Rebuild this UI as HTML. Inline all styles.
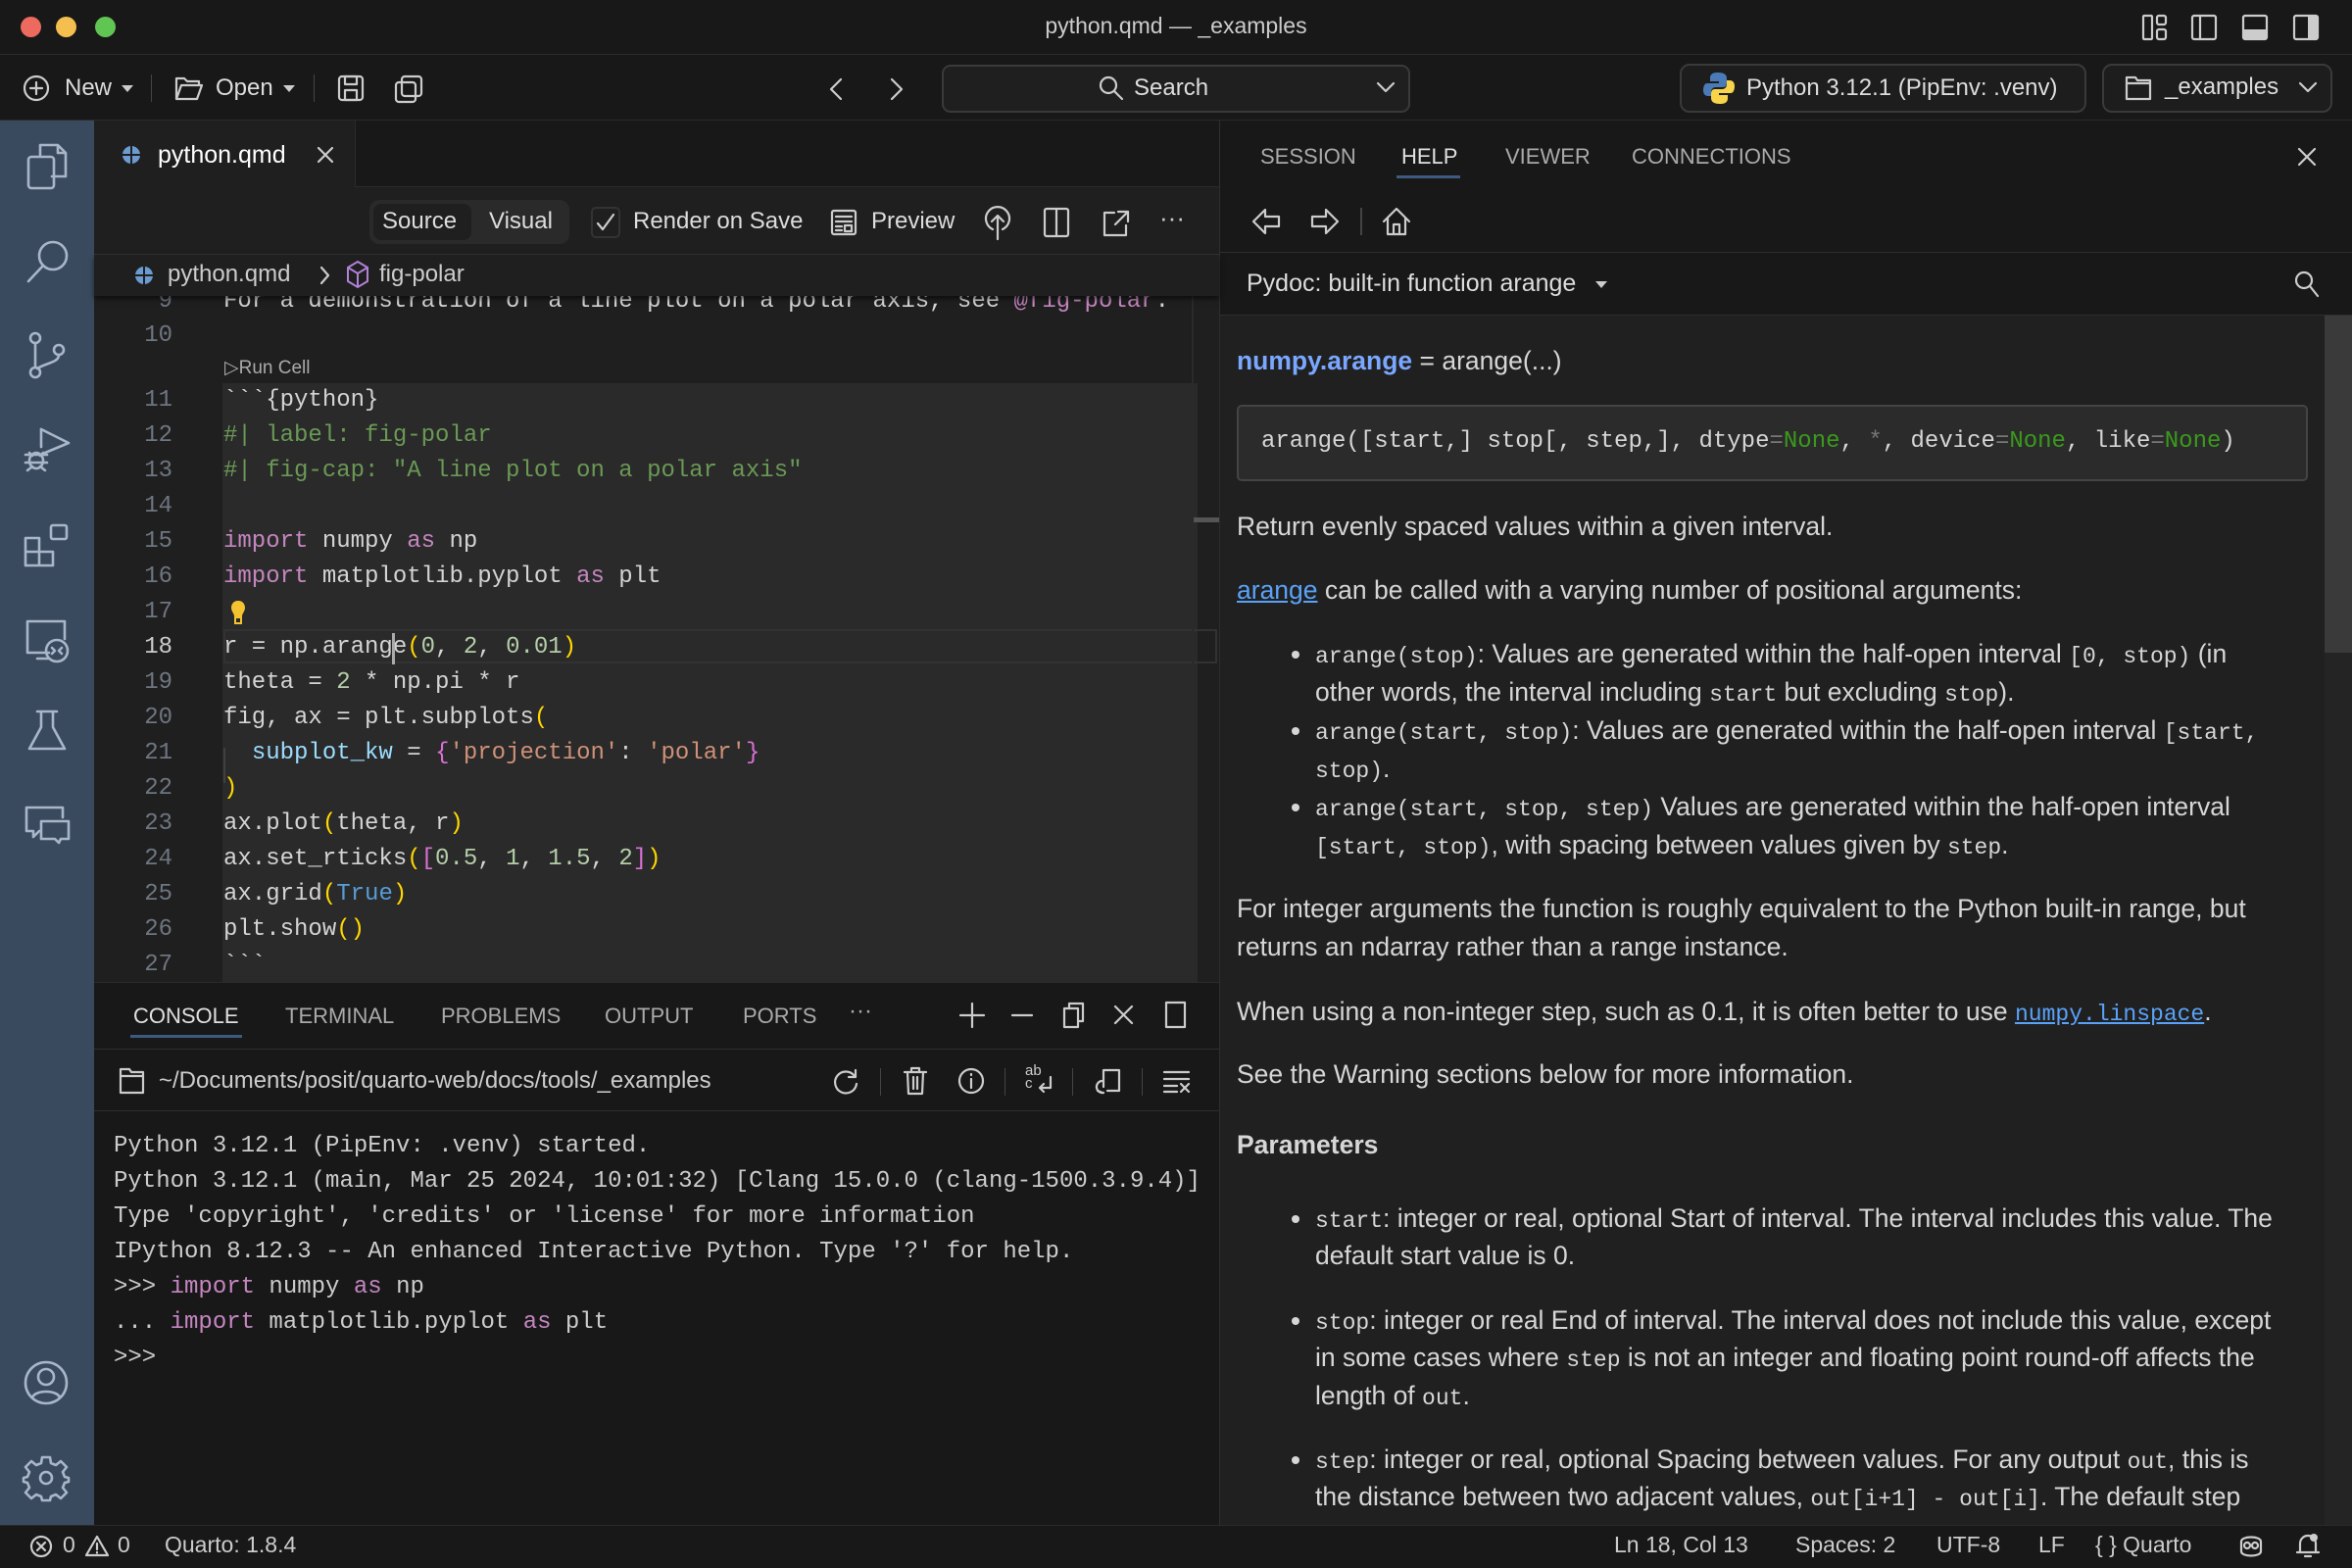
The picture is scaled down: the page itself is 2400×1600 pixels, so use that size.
<!DOCTYPE html>
<html><head><meta charset="utf-8">
<style>
*{box-sizing:border-box;margin:0;padding:0}
body{width:2400px;height:1600px;overflow:hidden;background:#1f1f1f;font-family:"Liberation Sans",sans-serif;color:#ccc;position:relative}
.a{position:absolute}
.m{font-family:"Liberation Mono",monospace}
.t{white-space:pre}
svg{position:absolute;overflow:visible}
.ic{fill:none;stroke:#cccccc;stroke-width:2.2;stroke-linecap:round;stroke-linejoin:round}
.ab{fill:none;stroke:#a9b6c8;stroke-width:2.6;stroke-linecap:round;stroke-linejoin:round}
.ln{position:absolute;left:100px;width:76px;text-align:right;font-family:"Liberation Mono",monospace;font-size:24px;line-height:36px;color:#6e7681}
.cl{position:absolute;left:228px;font-family:"Liberation Mono",monospace;font-size:24px;line-height:36px;white-space:pre;color:#d4d4d4}
.kw{color:#c586c0}.st{color:#ce9178}.nu{color:#b5cea8}.y{color:#ffd700}.p{color:#da70d6}.bl{color:#569cd6}.vr{color:#9cdcfe}.cm{color:#6a9955}
.cs{position:absolute;left:116px;font-family:"Liberation Mono",monospace;font-size:24px;line-height:36px;white-space:pre;color:#cccccc}
.h{position:absolute;left:1262px;font-size:26.5px;line-height:39px;white-space:pre;color:#d6d6d6}
.hb{position:absolute;left:1342px;font-size:26.5px;line-height:39px;white-space:pre;color:#d6d6d6}
.dot{position:absolute;left:1318px;width:8px;height:8px;border-radius:50%;background:#d6d6d6}
.c{font-family:"Liberation Mono",monospace;font-size:23px}
.lk{color:#5aa2f8;text-decoration:underline}
.ng{color:#3a9a1c}
</style></head><body>

<div class="a" style="left:0;top:0;width:2400px;height:123px;background:#181818"></div>
<div class="a" style="left:0;top:55px;width:2400px;height:1px;background:#2b2b2b"></div>
<div class="a" style="left:0;top:122px;width:2400px;height:1px;background:#2b2b2b"></div>
<div class="a" style="left:21px;top:17px;width:21px;height:21px;border-radius:50%;background:#ed6a5e"></div>
<div class="a" style="left:57px;top:17px;width:21px;height:21px;border-radius:50%;background:#f5bf4f"></div>
<div class="a" style="left:97px;top:17px;width:21px;height:21px;border-radius:50%;background:#61c554"></div>
<div class="a t" style="left:0;width:2400px;top:13px;text-align:center;font-size:23px;color:#cccccc">python.qmd — _examples</div>
<svg style="left:2186px;top:15px" width="26" height="26"><rect class="ic" x="1" y="1" width="9" height="24" rx="1"/><rect class="ic" x="15" y="1" width="9" height="9" rx="2"/><rect class="ic" x="15" y="15" width="9" height="10" rx="2"/></svg>
<svg style="left:2236px;top:15px" width="26" height="26"><rect class="ic" x="1" y="1" width="24" height="24" rx="2"/><line class="ic" x1="9" y1="1" x2="9" y2="25"/></svg>
<svg style="left:2288px;top:15px" width="26" height="26"><rect class="ic" x="1" y="1" width="24" height="24" rx="2"/><rect x="1" y="15" width="24" height="10" fill="#ccc"/></svg>
<svg style="left:2340px;top:15px" width="26" height="26"><rect class="ic" x="1" y="1" width="24" height="24" rx="2"/><rect x="15" y="1" width="10" height="24" fill="#ccc"/></svg>

<svg style="left:24px;top:77px" width="28" height="28"><circle class="ic" cx="13" cy="13" r="12"/><line class="ic" x1="13" y1="7" x2="13" y2="19"/><line class="ic" x1="7" y1="13" x2="19" y2="13"/></svg>
<div class="a t" style="left:66px;top:76px;font-size:24px;color:#ddd">New</div>
<div class="a" style="left:124px;top:87px;border-left:6px solid transparent;border-right:6px solid transparent;border-top:7px solid #ccc"></div>
<div class="a" style="left:154px;top:76px;width:1px;height:28px;background:#444"></div>
<svg style="left:178px;top:77px" width="30" height="26"><path class="ic" d="M2 24 V3 H10 L13 6 H25 V10 M2 24 L7 10 H28 L23 24 Z"/></svg>
<div class="a t" style="left:220px;top:76px;font-size:24px;color:#ddd">Open</div>
<div class="a" style="left:289px;top:87px;border-left:6px solid transparent;border-right:6px solid transparent;border-top:7px solid #ccc"></div>
<div class="a" style="left:320px;top:76px;width:1px;height:28px;background:#444"></div>
<svg style="left:344px;top:76px" width="28" height="28"><rect class="ic" x="2" y="2" width="24" height="24" rx="3"/><rect class="ic" x="8" y="2" width="12" height="8"/><rect class="ic" x="8" y="16" width="12" height="10"/></svg>
<svg style="left:402px;top:76px" width="30" height="30"><rect class="ic" x="8" y="2" width="20" height="20" rx="3" stroke="#888"/><rect class="ic" x="2" y="8" width="20" height="20" rx="3" stroke="#888"/></svg>
<svg style="left:846px;top:80px" width="14" height="22"><path class="ic" d="M12 1 L2 11 L12 21"/></svg>
<svg style="left:908px;top:80px" width="14" height="22"><path class="ic" d="M2 1 L12 11 L2 21" stroke="#888"/></svg>
<div class="a" style="left:961px;top:66px;width:478px;height:49px;border:2px solid #3a3a3a;border-radius:9px;background:#1f1f1f"></div>
<svg style="left:1120px;top:76px" width="28" height="28"><circle class="ic" cx="11" cy="11" r="8"/><line class="ic" x1="17" y1="17" x2="25" y2="25"/></svg>
<div class="a t" style="left:1157px;top:76px;font-size:24px;color:#ddd">Search</div>
<svg style="left:1405px;top:84px" width="18" height="12"><path class="ic" d="M1 1 L9 9 L17 1"/></svg>
<div class="a" style="left:1714px;top:65px;width:415px;height:50px;border:2px solid #3a3a3a;border-radius:10px;background:#1d1d1d"></div>
<svg style="left:1738px;top:73px" width="32" height="34"><path d="M15 1 C8 1 7 4 7 7 V10 H16 V12 H4 C1 12 0 16 0 19 C0 23 2 25 5 25 H8 V21 C8 18 10 16 13 16 H20 C23 16 24 14 24 11 V7 C24 3 21 1 15 1Z" fill="#4a7bb7"/><path d="M17 33 C24 33 25 30 25 27 V24 H16 V22 H28 C31 22 32 18 32 15 C32 11 30 9 27 9 H24 V13 C24 16 22 18 19 18 H12 C9 18 8 20 8 23 V27 C8 31 11 33 17 33Z" fill="#f7d44a"/></svg>
<div class="a t" style="left:1782px;top:76px;font-size:24px;color:#ddd">Python 3.12.1 (PipEnv: .venv)</div>
<div class="a" style="left:2145px;top:65px;width:235px;height:50px;border:2px solid #3a3a3a;border-radius:10px;background:#1d1d1d"></div>
<svg style="left:2168px;top:77px" width="28" height="26"><path class="ic" d="M2 2 H11 L13 5 H26 V24 H2 Z M2 8 H26"/></svg>
<div class="a t" style="left:2209px;top:75px;font-size:24px;color:#ddd">_examples</div>
<svg style="left:2346px;top:84px" width="18" height="12"><path class="ic" d="M1 1 L9 9 L17 1"/></svg>

<div class="a" style="left:0;top:123px;width:96px;height:1433px;background:#3a4a5e"></div>
<svg style="left:27px;top:146px" width="44" height="50"><path class="ab" d="M14 12 V2 H32 L40 10 V34 H26 M32 2 V10 H40"/><rect class="ab" x="2" y="14" width="26" height="32" rx="3"/></svg>
<svg style="left:26px;top:244px" width="46" height="46"><circle class="ab" cx="28" cy="17" r="14"/><line class="ab" x1="18" y1="27" x2="3" y2="43"/></svg>
<svg style="left:28px;top:338px" width="40" height="50"><circle class="ab" cx="8" cy="7" r="5"/><circle class="ab" cx="8" cy="42" r="5"/><circle class="ab" cx="32" cy="19" r="5"/><line class="ab" x1="8" y1="12" x2="8" y2="37"/><path class="ab" d="M32 24 C32 32 20 32 10 38"/></svg>
<svg style="left:24px;top:434px" width="50" height="50"><path class="ab" d="M18 4 L46 18 L22 28"/><line class="ab" x1="18" y1="4" x2="18" y2="22"/><ellipse class="ab" cx="13" cy="36" rx="7" ry="8"/><path class="ab" d="M2 30 H24 M2 38 H24 M4 46 L9 42 M22 46 L17 42 M6 28 L9 31 M20 28 L17 31"/></svg>
<svg style="left:24px;top:533px" width="50" height="50"><path class="ab" d="M2 16 H16 V30 H30 V44 H2 Z M16 30 V44 M2 30 H16"/><rect class="ab" x="28" y="3" width="16" height="14" rx="2"/></svg>
<svg style="left:24px;top:630px" width="50" height="50"><path class="ab" d="M26 36 H4 V4 H42 V22"/><line class="ab" x1="14" y1="42" x2="26" y2="42"/><circle class="ab" cx="34" cy="34" r="11"/><path class="ab" d="M29 31 L32 34 L29 37 M39 31 L36 34 L39 37"/></svg>
<svg style="left:26px;top:724px" width="46" height="50"><path class="ab" d="M12 2 H32 M16 2 V18 L4 40 H40 L28 18 V2"/></svg>
<svg style="left:24px;top:820px" width="50" height="46"><path class="ab" d="M3 4 H40 V14 M3 4 V28 H10 V34 L16 28"/><path class="ab" d="M18 18 H46 V36 H38 L36 40 L32 36 H18 Z"/></svg>
<svg style="left:24px;top:1388px" width="48" height="48"><circle class="ab" cx="23" cy="23" r="21"/><circle class="ab" cx="23" cy="17" r="8"/><path class="ab" d="M9 38 C12 30 34 30 37 38"/></svg>
<svg style="left:24px;top:1485px" width="48" height="48"><circle class="ab" cx="23" cy="23" r="6"/><path class="ab" d="M19 2 H27 L28 8 L33 10 L38 6 L44 12 L40 17 L42 22 L46 23 V27 L42 28 L40 33 L44 38 L38 44 L33 40 L28 42 L27 46 H19 L18 42 L13 40 L8 44 L2 38 L6 33 L4 28 L0 27 V23 L4 22 L6 17 L2 12 L8 6 L13 10 L18 8 Z"/></svg>

<div class="a" style="left:96px;top:123px;width:1148px;height:68px;background:#181818;border-bottom:1px solid #2b2b2b"></div>
<div class="a" style="left:96px;top:123px;width:267px;height:69px;background:#1f1f1f;border-right:1px solid #2b2b2b"></div>
<svg style="left:124px;top:148px" width="20" height="20"><circle cx="10" cy="10" r="9" fill="#6b9bd1"/><line x1="10" y1="1" x2="10" y2="19" stroke="#1f1f1f" stroke-width="2"/><line x1="1" y1="10" x2="19" y2="10" stroke="#1f1f1f" stroke-width="2"/></svg>
<div class="a t" style="left:161px;top:144px;font-size:25px;color:#fff">python.qmd</div>
<svg style="left:324px;top:150px" width="16" height="16"><path class="ic" d="M1 1 L15 15 M15 1 L1 15" stroke="#ddd"/></svg>

<div class="a" style="left:96px;top:191px;width:1148px;height:69px;background:#1f1f1f;border-bottom:1px solid #333"></div>
<div class="a" style="left:377px;top:204px;width:204px;height:45px;border-radius:10px;background:#2a2a2a"></div>
<div class="a" style="left:381px;top:208px;width:100px;height:37px;border-radius:8px;background:#1f1f1f"></div>
<div class="a t" style="left:390px;top:212px;font-size:24px;color:#ddd">Source</div>
<div class="a t" style="left:499px;top:212px;font-size:24px;color:#ddd">Visual</div>
<div class="a" style="left:603px;top:211px;width:30px;height:32px;border:2px solid #333;border-radius:5px"></div>
<svg style="left:609px;top:218px" width="18" height="18"><path class="ic" d="M1 10 L6 16 L17 1"/></svg>
<div class="a t" style="left:646px;top:212px;font-size:24px;color:#ddd">Render on Save</div>
<svg style="left:848px;top:214px" width="26" height="26"><rect class="ic" x="1" y="1" width="24" height="24" rx="2"/><path class="ic" d="M5 7 H21 M5 12 H21 M5 17 H11 M5 21 H11"/><rect class="ic" x="14" y="16" width="7" height="6"/></svg>
<div class="a t" style="left:889px;top:212px;font-size:24px;color:#ddd">Preview</div>
<svg style="left:1004px;top:210px" width="28" height="36"><path class="ic" d="M9 24 A12 12 0 1 1 19 24"/><path class="ic" d="M14 34 V10 M8 16 L14 10 L20 16"/></svg>
<svg style="left:1065px;top:212px" width="26" height="30"><rect class="ic" x="1" y="1" width="24" height="28" rx="2"/><line class="ic" x1="13" y1="1" x2="13" y2="29"/></svg>
<svg style="left:1125px;top:214px" width="28" height="28"><path class="ic" d="M12 3 H2 V26 H24 V16 M16 2 H26 V12 M26 2 L13 15"/></svg>
<div class="a t" style="left:1183px;top:207px;font-size:26px;color:#ccc">···</div>

<div class="a" style="left:96px;top:260px;width:1148px;height:42px;background:#1f1f1f;box-shadow:0 3px 5px rgba(0,0,0,.55);z-index:3"></div>
<svg style="left:137px;top:271px;z-index:4" width="20" height="20"><circle cx="10" cy="10" r="9" fill="#6b9bd1"/><line x1="10" y1="1" x2="10" y2="19" stroke="#1f1f1f" stroke-width="2"/><line x1="1" y1="10" x2="19" y2="10" stroke="#1f1f1f" stroke-width="2"/></svg>
<div class="a t" style="left:171px;top:266px;font-size:24px;color:#ccc;z-index:4">python.qmd</div>
<svg style="left:327px;top:272px;z-index:4" width="10" height="18"><path class="ic" d="M1 1 L8 9 L1 17" stroke="#aaa"/></svg>
<svg style="left:353px;top:266px;z-index:4" width="24" height="28"><path d="M12 1 L22 7 V21 L12 27 L2 21 V7 Z M2 7 L12 13 L22 7 M12 13 V27" fill="none" stroke="#b180d7" stroke-width="2"/></svg>
<div class="a t" style="left:387px;top:266px;font-size:24px;color:#ccc;z-index:4">fig-polar</div>

<div class="a" style="left:227px;top:391px;width:995px;height:611px;background:#2a2a2a"></div>
<div class="a" style="left:228px;top:642px;width:1014px;height:35px;border:2px solid #323232"></div>
<div class="a" style="left:1216px;top:302px;width:2px;height:700px;background:#2a2a2a"></div>
<div class="a" style="left:1218px;top:528px;width:26px;height:5px;background:#555"></div>
<div class="a" style="left:228px;top:763px;width:2px;height:36px;background:#404040"></div>

<div class="ln" style="top:290px">9</div>
<div class="cl" style="top:290px">For a demonstration of a line plot on a polar axis, see <span style="color:#c586c0">@fig-polar</span>.</div>
<div class="ln" style="top:325px">10</div>
<div class="a t" style="left:229px;top:364px;font-size:19px;color:#aaa">▷Run Cell</div>
<div class="ln" style="top:391px">11</div><div class="cl" style="top:391px">&#96;&#96;&#96;{python}</div>
<div class="ln" style="top:427px">12</div><div class="cl cm" style="top:427px">#| label: fig-polar</div>
<div class="ln" style="top:463px">13</div><div class="cl cm" style="top:463px">#| fig-cap: "A line plot on a polar axis"</div>
<div class="ln" style="top:499px">14</div>
<div class="ln" style="top:535px">15</div><div class="cl" style="top:535px"><span class="kw">import</span> numpy <span class="kw">as</span> np</div>
<div class="ln" style="top:571px">16</div><div class="cl" style="top:571px"><span class="kw">import</span> matplotlib.pyplot <span class="kw">as</span> plt</div>
<div class="ln" style="top:607px">17</div>
<svg style="left:235px;top:612px" width="16" height="26"><path d="M8 1 C3 1 1 5 1 8 C1 12 4 14 4 17 H12 C12 14 15 12 15 8 C15 5 13 1 8 1Z" fill="#f4c430"/><rect x="5" y="18" width="6" height="6" fill="none" stroke="#f4c430" stroke-width="2"/></svg>
<div class="ln" style="top:643px;color:#ccc">18</div><div class="cl" style="top:643px">r = np.arange<span class="y">(</span><span class="nu">0</span>, <span class="nu">2</span>, <span class="nu">0.01</span><span class="y">)</span></div>
<div class="a" style="left:400px;top:646px;width:3px;height:32px;background:#aaa"></div>
<div class="ln" style="top:679px">19</div><div class="cl" style="top:679px">theta = <span class="nu">2</span> * np.pi * r</div>
<div class="ln" style="top:715px">20</div><div class="cl" style="top:715px">fig, ax = plt.subplots<span class="y">(</span></div>
<div class="ln" style="top:751px">21</div><div class="cl" style="top:751px">  <span class="vr">subplot_kw</span> = <span class="p">{</span><span class="st">'projection'</span>: <span class="st">'polar'</span><span class="p">}</span></div>
<div class="ln" style="top:787px">22</div><div class="cl" style="top:787px"><span class="y">)</span></div>
<div class="ln" style="top:823px">23</div><div class="cl" style="top:823px">ax.plot<span class="y">(</span>theta, r<span class="y">)</span></div>
<div class="ln" style="top:859px">24</div><div class="cl" style="top:859px">ax.set_rticks<span class="y">(</span><span class="p">[</span><span class="nu">0.5</span>, <span class="nu">1</span>, <span class="nu">1.5</span>, <span class="nu">2</span><span class="p">]</span><span class="y">)</span></div>
<div class="ln" style="top:895px">25</div><div class="cl" style="top:895px">ax.grid<span class="y">(</span><span class="bl">True</span><span class="y">)</span></div>
<div class="ln" style="top:931px">26</div><div class="cl" style="top:931px">plt.show<span class="y">()</span></div>
<div class="ln" style="top:967px">27</div><div class="cl" style="top:967px">&#96;&#96;&#96;</div>

<div class="a" style="left:96px;top:1002px;width:1148px;height:554px;background:#181818;border-top:1px solid #2b2b2b"></div>
<div class="a t" style="left:136px;top:1024px;font-size:22px;color:#e0e0e0">CONSOLE</div>
<div class="a" style="left:133px;top:1056px;width:114px;height:3px;background:#3d5a80"></div>
<div class="a t" style="left:291px;top:1024px;font-size:22px;color:#aaa">TERMINAL</div>
<div class="a t" style="left:450px;top:1024px;font-size:22px;color:#aaa">PROBLEMS</div>
<div class="a t" style="left:617px;top:1024px;font-size:22px;color:#aaa">OUTPUT</div>
<div class="a t" style="left:758px;top:1024px;font-size:22px;color:#aaa">PORTS</div>
<div class="a t" style="left:866px;top:1018px;font-size:24px;color:#aaa">···</div>
<svg style="left:979px;top:1023px" width="26" height="26"><path class="ic" d="M13 1 V25 M1 13 H25"/></svg>
<svg style="left:1032px;top:1023px" width="22" height="26"><path class="ic" d="M1 13 H21"/></svg>
<svg style="left:1084px;top:1022px" width="24" height="28"><rect class="ic" x="2" y="7" width="14" height="19"/><path class="ic" d="M7 7 V2 H21 V20 H16"/></svg>
<svg style="left:1137px;top:1026px" width="20" height="20"><path class="ic" d="M1 1 L18 18 M18 1 L1 18"/></svg>
<svg style="left:1189px;top:1022px" width="22" height="28"><rect class="ic" x="1" y="1" width="19" height="25"/></svg>
<div class="a" style="left:96px;top:1070px;width:1148px;height:1px;background:#2e2e2e"></div>
<div class="a" style="left:96px;top:1133px;width:1148px;height:1px;background:#2e2e2e"></div>
<svg style="left:122px;top:1090px" width="26" height="26"><path class="ic" d="M1 1 H10 L12 4 H24 V25 H1 Z M1 8 H24"/></svg>
<div class="a t" style="left:162px;top:1089px;font-size:24px;color:#ccc">~/Documents/posit/quarto-web/docs/tools/_examples</div>
<svg style="left:850px;top:1090px" width="28" height="28"><path class="ic" d="M22 8 A11 11 0 1 0 24 16 M23 2 V9 H16"/></svg>
<div class="a" style="left:898px;top:1090px;width:1px;height:28px;background:#444"></div>
<svg style="left:922px;top:1088px" width="24" height="30"><path class="ic" d="M1 6 H23 M8 6 V2 H16 V6 M4 6 L5 28 H19 L20 6 M10 11 V23 M14 11 V23"/></svg>
<svg style="left:977px;top:1089px" width="28" height="28"><circle class="ic" cx="14" cy="14" r="12"/><path class="ic" d="M14 12 V21 M14 7 V8"/></svg>
<div class="a" style="left:1025px;top:1090px;width:1px;height:28px;background:#444"></div>
<div class="a t" style="left:1046px;top:1086px;font-size:15px;line-height:13px;color:#ccc">ab<br>c</div>
<svg style="left:1058px;top:1098px" width="18" height="20"><path class="ic" d="M14 1 V12 H3 M7 8 L3 12 L7 16"/></svg>
<div class="a" style="left:1094px;top:1090px;width:1px;height:28px;background:#444"></div>
<svg style="left:1118px;top:1089px" width="28" height="28"><path class="ic" d="M8 20 V3 H24 V24 H12 M6 14 A6 6 0 1 0 8 26 M2 24 L7 26"/></svg>
<div class="a" style="left:1165px;top:1090px;width:1px;height:28px;background:#444"></div>
<svg style="left:1187px;top:1092px" width="28" height="24"><path class="ic" d="M1 2 H26 M1 9 H26 M1 16 H14 M1 22 H14 M18 14 L26 22 M26 14 L18 22"/></svg>

<div class="cs" style="top:1152px">Python 3.12.1 (PipEnv: .venv) started.</div>
<div class="cs" style="top:1188px">Python 3.12.1 (main, Mar 25 2024, 10:01:32) [Clang 15.0.0 (clang-1500.3.9.4)]</div>
<div class="cs" style="top:1224px">Type 'copyright', 'credits' or 'license' for more information</div>
<div class="cs" style="top:1260px">IPython 8.12.3 -- An enhanced Interactive Python. Type '?' for help.</div>
<div class="cs" style="top:1296px">&gt;&gt;&gt; <span class="kw">import</span> numpy <span class="kw">as</span> np</div>
<div class="cs" style="top:1332px">... <span class="kw">import</span> matplotlib.pyplot <span class="kw">as</span> plt</div>
<div class="cs" style="top:1368px">&gt;&gt;&gt;</div>

<div class="a" style="left:1244px;top:123px;width:1156px;height:1433px;background:#202020;border-left:1px solid #2e2e2e"></div>
<div class="a" style="left:1245px;top:123px;width:1155px;height:198px;background:#181818"></div>
<div class="a t" style="left:1286px;top:147px;font-size:22px;color:#aaa">SESSION</div>
<div class="a t" style="left:1430px;top:147px;font-size:22px;color:#e0e0e0">HELP</div>
<div class="a" style="left:1425px;top:179px;width:65px;height:3px;background:#3d5a80"></div>
<div class="a t" style="left:1536px;top:147px;font-size:22px;color:#aaa">VIEWER</div>
<div class="a t" style="left:1665px;top:147px;font-size:22px;color:#aaa">CONNECTIONS</div>
<svg style="left:2345px;top:151px" width="18" height="18"><path class="ic" d="M1 1 L17 17 M17 1 L1 17"/></svg>
<svg style="left:1277px;top:212px" width="30" height="28"><path class="ic" d="M28 9 H14 V2 L2 14 L14 26 V19 H28 Z" stroke="#777"/></svg>
<svg style="left:1337px;top:212px" width="30" height="28"><path class="ic" d="M2 9 H16 V2 L28 14 L16 26 V19 H2 Z" stroke="#777"/></svg>
<div class="a" style="left:1388px;top:212px;width:2px;height:28px;background:#444"></div>
<svg style="left:1410px;top:211px" width="30" height="30"><path class="ic" d="M2 15 L15 2 L28 15 M6 12 V28 H24 V12 M12 28 V18 H18 V28" stroke="#777"/></svg>
<div class="a" style="left:1245px;top:257px;width:1155px;height:1px;background:#2e2e2e"></div>
<div class="a t" style="left:1272px;top:275px;font-size:25px;color:#ddd">Pydoc: built-in function arange</div>
<div class="a" style="left:1628px;top:287px;border-left:6px solid transparent;border-right:6px solid transparent;border-top:7px solid #ccc"></div>
<svg style="left:2341px;top:276px" width="26" height="28"><circle class="ic" cx="10" cy="10" r="8"/><line class="ic" x1="16" y1="16" x2="24" y2="26"/></svg>
<div class="a" style="left:1245px;top:321px;width:1155px;height:1px;background:#2e2e2e"></div>
<div class="a" style="left:2372px;top:322px;width:28px;height:1234px;background:#242424"></div>
<div class="a" style="left:2372px;top:322px;width:28px;height:344px;background:#3a3a3a"></div>

<div class="h" style="top:349px"><b style="color:#7aa7ff">numpy.arange</b> = arange(...)</div>
<div class="a" style="left:1262px;top:413px;width:1093px;height:78px;background:#2b2b2b;border:2px solid #444;border-radius:5px"></div>
<div class="a t m" style="left:1287px;top:433px;font-size:24px;line-height:36px;color:#d6d6d6">arange([start,] stop[, step,], dtype<span style="color:#777">=</span><span class="ng">None</span>, <span style="color:#777">*</span>, device<span style="color:#777">=</span><span class="ng">None</span>, like<span style="color:#777">=</span><span class="ng">None</span>)</div>
<div class="h" style="top:518px">Return evenly spaced values within a given interval.</div>
<div class="h" style="top:583px"><span class="lk">arange</span> can be called with a varying number of positional arguments:</div>
<div class="dot" style="top:664px"></div>
<div class="hb" style="top:648px"><span class="c">arange(stop)</span>: Values are generated within the half-open interval <span class="c">[0, stop)</span> (in</div>
<div class="hb" style="top:687px">other words, the interval including <span class="c">start</span> but excluding <span class="c">stop</span>).</div>
<div class="dot" style="top:742px"></div>
<div class="hb" style="top:726px"><span class="c">arange(start, stop)</span>: Values are generated within the half-open interval <span class="c">[start,</span></div>
<div class="hb" style="top:765px"><span class="c">stop)</span>.</div>
<div class="dot" style="top:820px"></div>
<div class="hb" style="top:804px"><span class="c">arange(start, stop, step)</span> Values are generated within the half-open interval</div>
<div class="hb" style="top:843px"><span class="c">[start, stop)</span>, with spacing between values given by <span class="c">step</span>.</div>
<div class="h" style="top:908px">For integer arguments the function is roughly equivalent to the Python built-in range, but</div>
<div class="h" style="top:947px">returns an ndarray rather than a range instance.</div>
<div class="h" style="top:1013px">When using a non-integer step, such as 0.1, it is often better to use <span class="lk c">numpy.linspace</span>.</div>
<div class="h" style="top:1077px">See the Warning sections below for more information.</div>
<div class="h" style="top:1149px;font-weight:bold">Parameters</div>
<div class="dot" style="top:1240px"></div>
<div class="hb" style="top:1224px"><span class="c">start</span>: integer or real, optional Start of interval. The interval includes this value. The</div>
<div class="hb" style="top:1262px">default start value is 0.</div>
<div class="dot" style="top:1344px"></div>
<div class="hb" style="top:1328px"><span class="c">stop</span>: integer or real End of interval. The interval does not include this value, except</div>
<div class="hb" style="top:1366px">in some cases where <span class="c">step</span> is not an integer and floating point round-off affects the</div>
<div class="hb" style="top:1405px">length of <span class="c">out</span>.</div>
<div class="dot" style="top:1486px"></div>
<div class="hb" style="top:1470px"><span class="c">step</span>: integer or real, optional Spacing between values. For any output <span class="c">out</span>, this is</div>
<div class="hb" style="top:1508px">the distance between two adjacent values, <span class="c">out[i+1] - out[i]</span>. The default step</div>

<div class="a" style="left:0;top:1556px;width:2400px;height:44px;background:#181818;border-top:1px solid #2b2b2b"></div>
<svg style="left:31px;top:1567px" width="22" height="22"><circle class="ic" cx="11" cy="11" r="10"/><path class="ic" d="M7 7 L15 15 M15 7 L7 15"/></svg>
<div class="a t" style="left:64px;top:1563px;font-size:23px;color:#ccc">0</div>
<svg style="left:87px;top:1566px" width="24" height="22"><path class="ic" d="M12 2 L23 21 H1 Z M12 9 V15 M12 18 V18.5"/></svg>
<div class="a t" style="left:120px;top:1563px;font-size:23px;color:#ccc">0</div>
<div class="a t" style="left:168px;top:1563px;font-size:23px;color:#ccc">Quarto: 1.8.4</div>
<div class="a t" style="left:1647px;top:1563px;font-size:23px;color:#ccc">Ln 18, Col 13</div>
<div class="a t" style="left:1832px;top:1563px;font-size:23px;color:#ccc">Spaces: 2</div>
<div class="a t" style="left:1976px;top:1563px;font-size:23px;color:#ccc">UTF-8</div>
<div class="a t" style="left:2080px;top:1563px;font-size:23px;color:#ccc">LF</div>
<div class="a t" style="left:2138px;top:1563px;font-size:23px;color:#ccc">{ } Quarto</div>
<svg style="left:2284px;top:1565px" width="26" height="26"><path class="ic" d="M3 8 C3 2 23 2 23 8 V18 C23 24 3 24 3 18 Z"/><circle class="ic" cx="9" cy="12" r="3"/><circle class="ic" cx="17" cy="12" r="3"/></svg>
<svg style="left:2342px;top:1564px" width="26" height="28"><path class="ic" d="M5 20 V11 A8 8 0 0 1 21 11 V20 H2 H24 M10 24 H16"/><circle cx="19" cy="5" r="4" fill="#ccc"/></svg>
</body></html>
